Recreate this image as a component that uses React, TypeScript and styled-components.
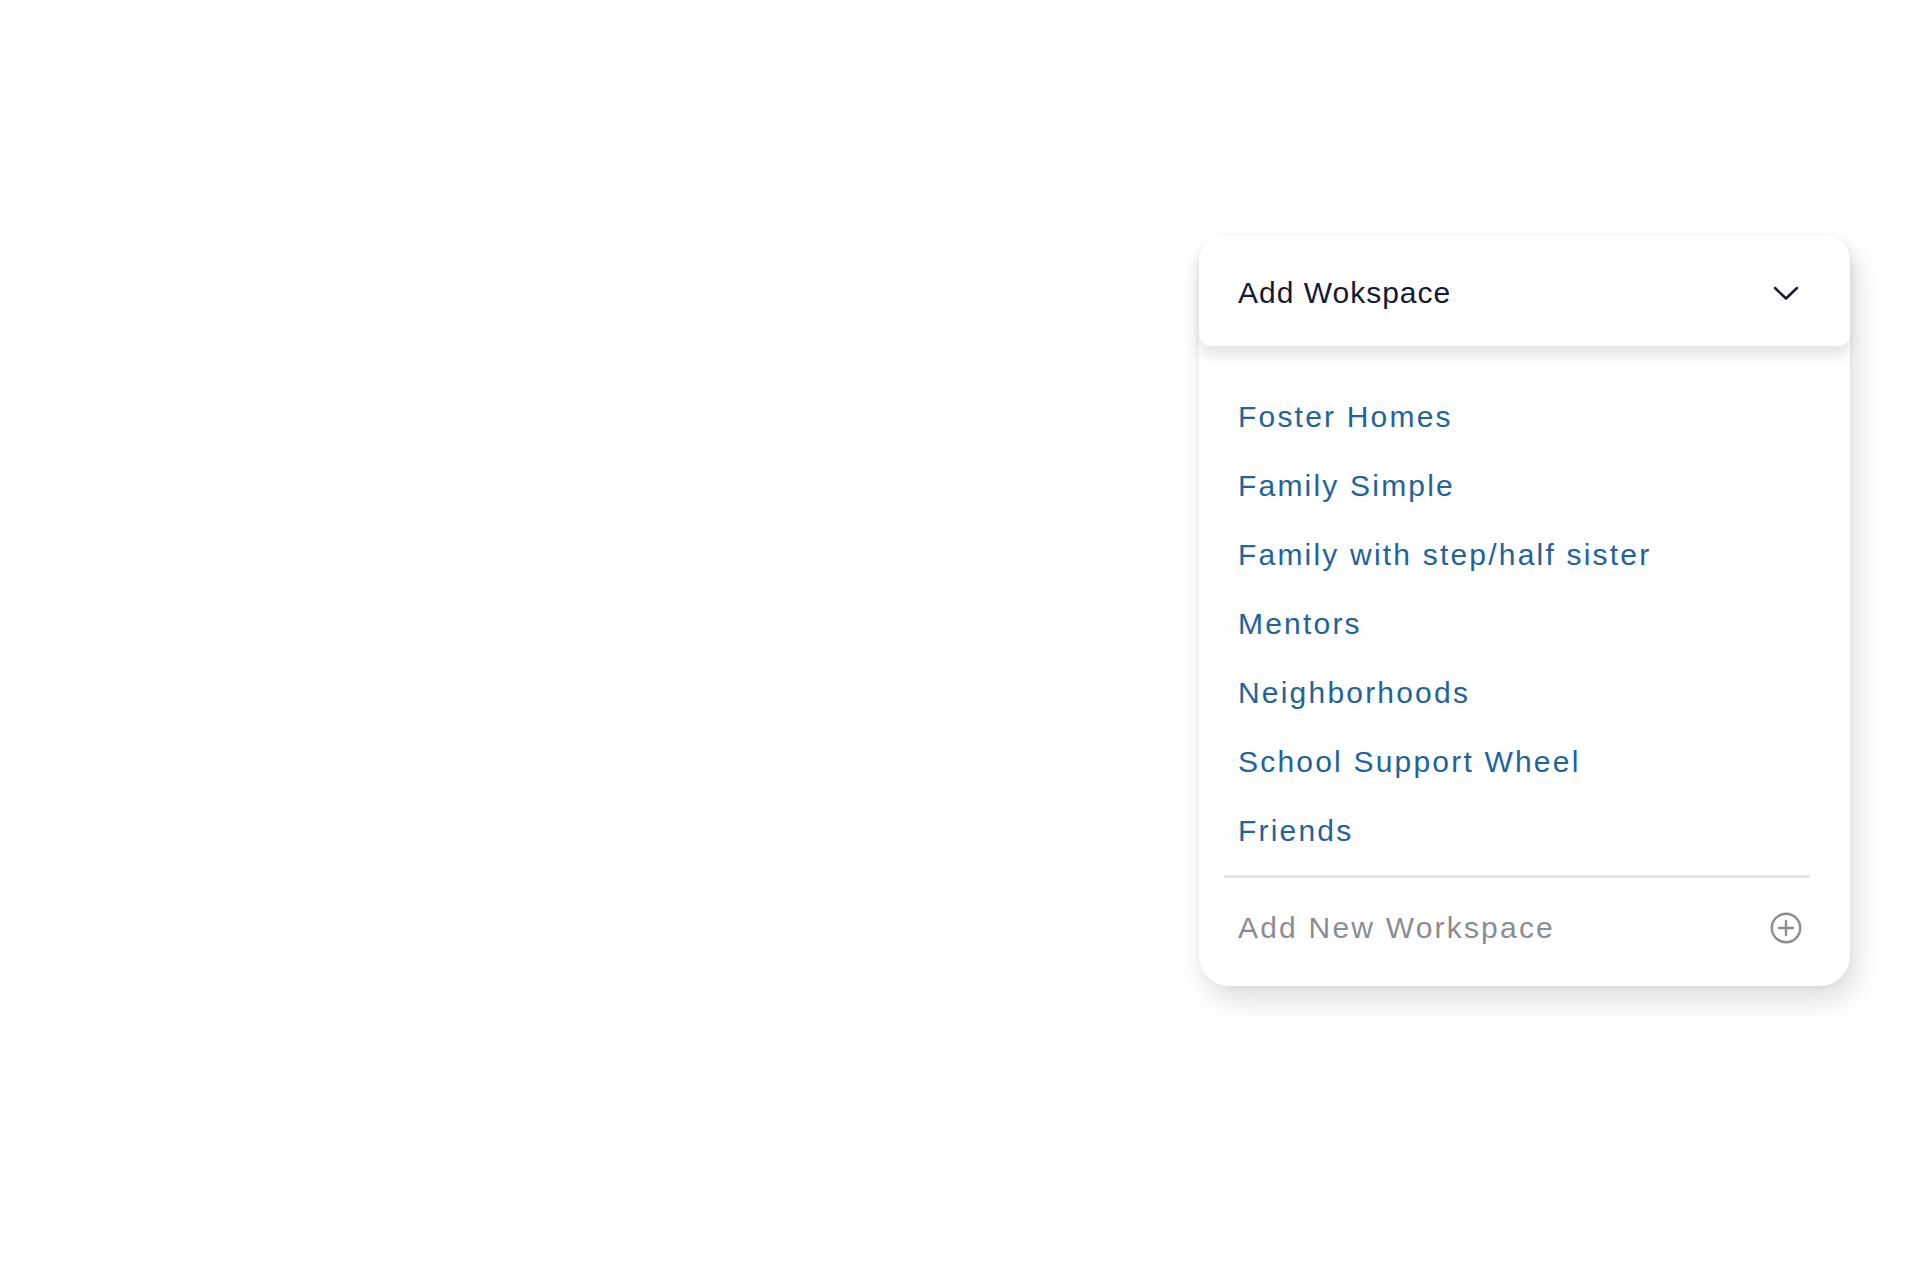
import styled, { createGlobalStyle } from "styled-components";

const workspaces = [
  "Foster Homes",
  "Family Simple",
  "Family with step/half sister",
  "Mentors",
  "Neighborhoods",
  "School Support Wheel",
  "Friends",
];

const ChevronDown = () => (
  <svg width="28" height="16" viewBox="0 0 28 16" fill="none">
    <polyline
      points="3,3 14,13.5 25,3"
      stroke="#161b33"
      strokeWidth="2.5"
      strokeLinecap="round"
      strokeLinejoin="round"
    />
  </svg>
);

const PlusCircle = () => (
  <svg width="32" height="32" viewBox="0 0 32 32" fill="none">
    <circle cx="16" cy="16" r="14.2" stroke="#8a8d92" strokeWidth="2.4" />
    <line x1="16" y1="9" x2="16" y2="23" stroke="#8a8d92" strokeWidth="2.4" strokeLinecap="round" />
    <line x1="9" y1="16" x2="23" y2="16" stroke="#8a8d92" strokeWidth="2.4" strokeLinecap="round" />
  </svg>
);

const App = () => {
  return (
    <>
      <GlobalStyle />
      <Page>
        <DropdownCard>
          <DropdownHeader>
            <HeaderTitle>Add Wokspace</HeaderTitle>
            <IconSlot>
              <ChevronDown />
            </IconSlot>
          </DropdownHeader>
          <WorkspaceList>
            {workspaces.map((name) => (
              <WorkspaceItem key={name}>{name}</WorkspaceItem>
            ))}
          </WorkspaceList>
          <Divider />
          <AddRow>
            <AddLabel>Add New Workspace</AddLabel>
            <IconSlot>
              <PlusCircle />
            </IconSlot>
          </AddRow>
        </DropdownCard>
      </Page>
    </>
  );
};

export default App;

const GlobalStyle = createGlobalStyle`
  html, body {
    margin: 0;
    padding: 0;
    background: #ffffff;
  }
  body {
    font-family: "Liberation Sans", Arial, Helvetica, sans-serif;
  }
`;

const Page = styled.div`
  min-height: 1280px;
  display: flex;
  justify-content: flex-end;
  align-items: flex-start;
  padding: 236px 70px 0 0;
  box-sizing: border-box;
`;

const DropdownCard = styled.div`
  width: 651px;
  background: #ffffff;
  border-radius: 24px 24px 30px 30px;
  box-shadow: 6px 14px 28px rgba(0, 0, 0, 0.13), 0 2px 6px rgba(0, 0, 0, 0.04);
  display: flex;
  flex-direction: column;
`;

const DropdownHeader = styled.div`
  height: 110px;
  display: flex;
  align-items: center;
  justify-content: space-between;
  padding: 4px 50px 0 39px;
  box-sizing: border-box;
  background: #ffffff;
  border-radius: 24px 24px 12px 12px;
  box-shadow: 0 9px 14px rgba(0, 0, 0, 0.11);
  position: relative;
  z-index: 1;
`;

const HeaderTitle = styled.span`
  font-size: 30px;
  letter-spacing: 1px;
  color: #141a33;
`;

const IconSlot = styled.span`
  display: flex;
  align-items: center;
  justify-content: center;
`;

const WorkspaceList = styled.div`
  display: flex;
  flex-direction: column;
  padding: 36px 0 0 39px;
`;

const WorkspaceItem = styled.div`
  height: 69px;
  line-height: 69px;
  font-size: 30px;
  letter-spacing: 2.2px;
  color: #22639a;
  cursor: pointer;
`;

const Divider = styled.div`
  height: 3px;
  background: #e6e6e6;
  margin: 10px 40px 0 25px;
`;

const AddRow = styled.div`
  height: 60px;
  display: flex;
  align-items: center;
  justify-content: space-between;
  padding: 20px 48px 28px 39px;
`;

const AddLabel = styled.span`
  font-size: 30px;
  letter-spacing: 2.2px;
  color: #8a8d92;
`;
